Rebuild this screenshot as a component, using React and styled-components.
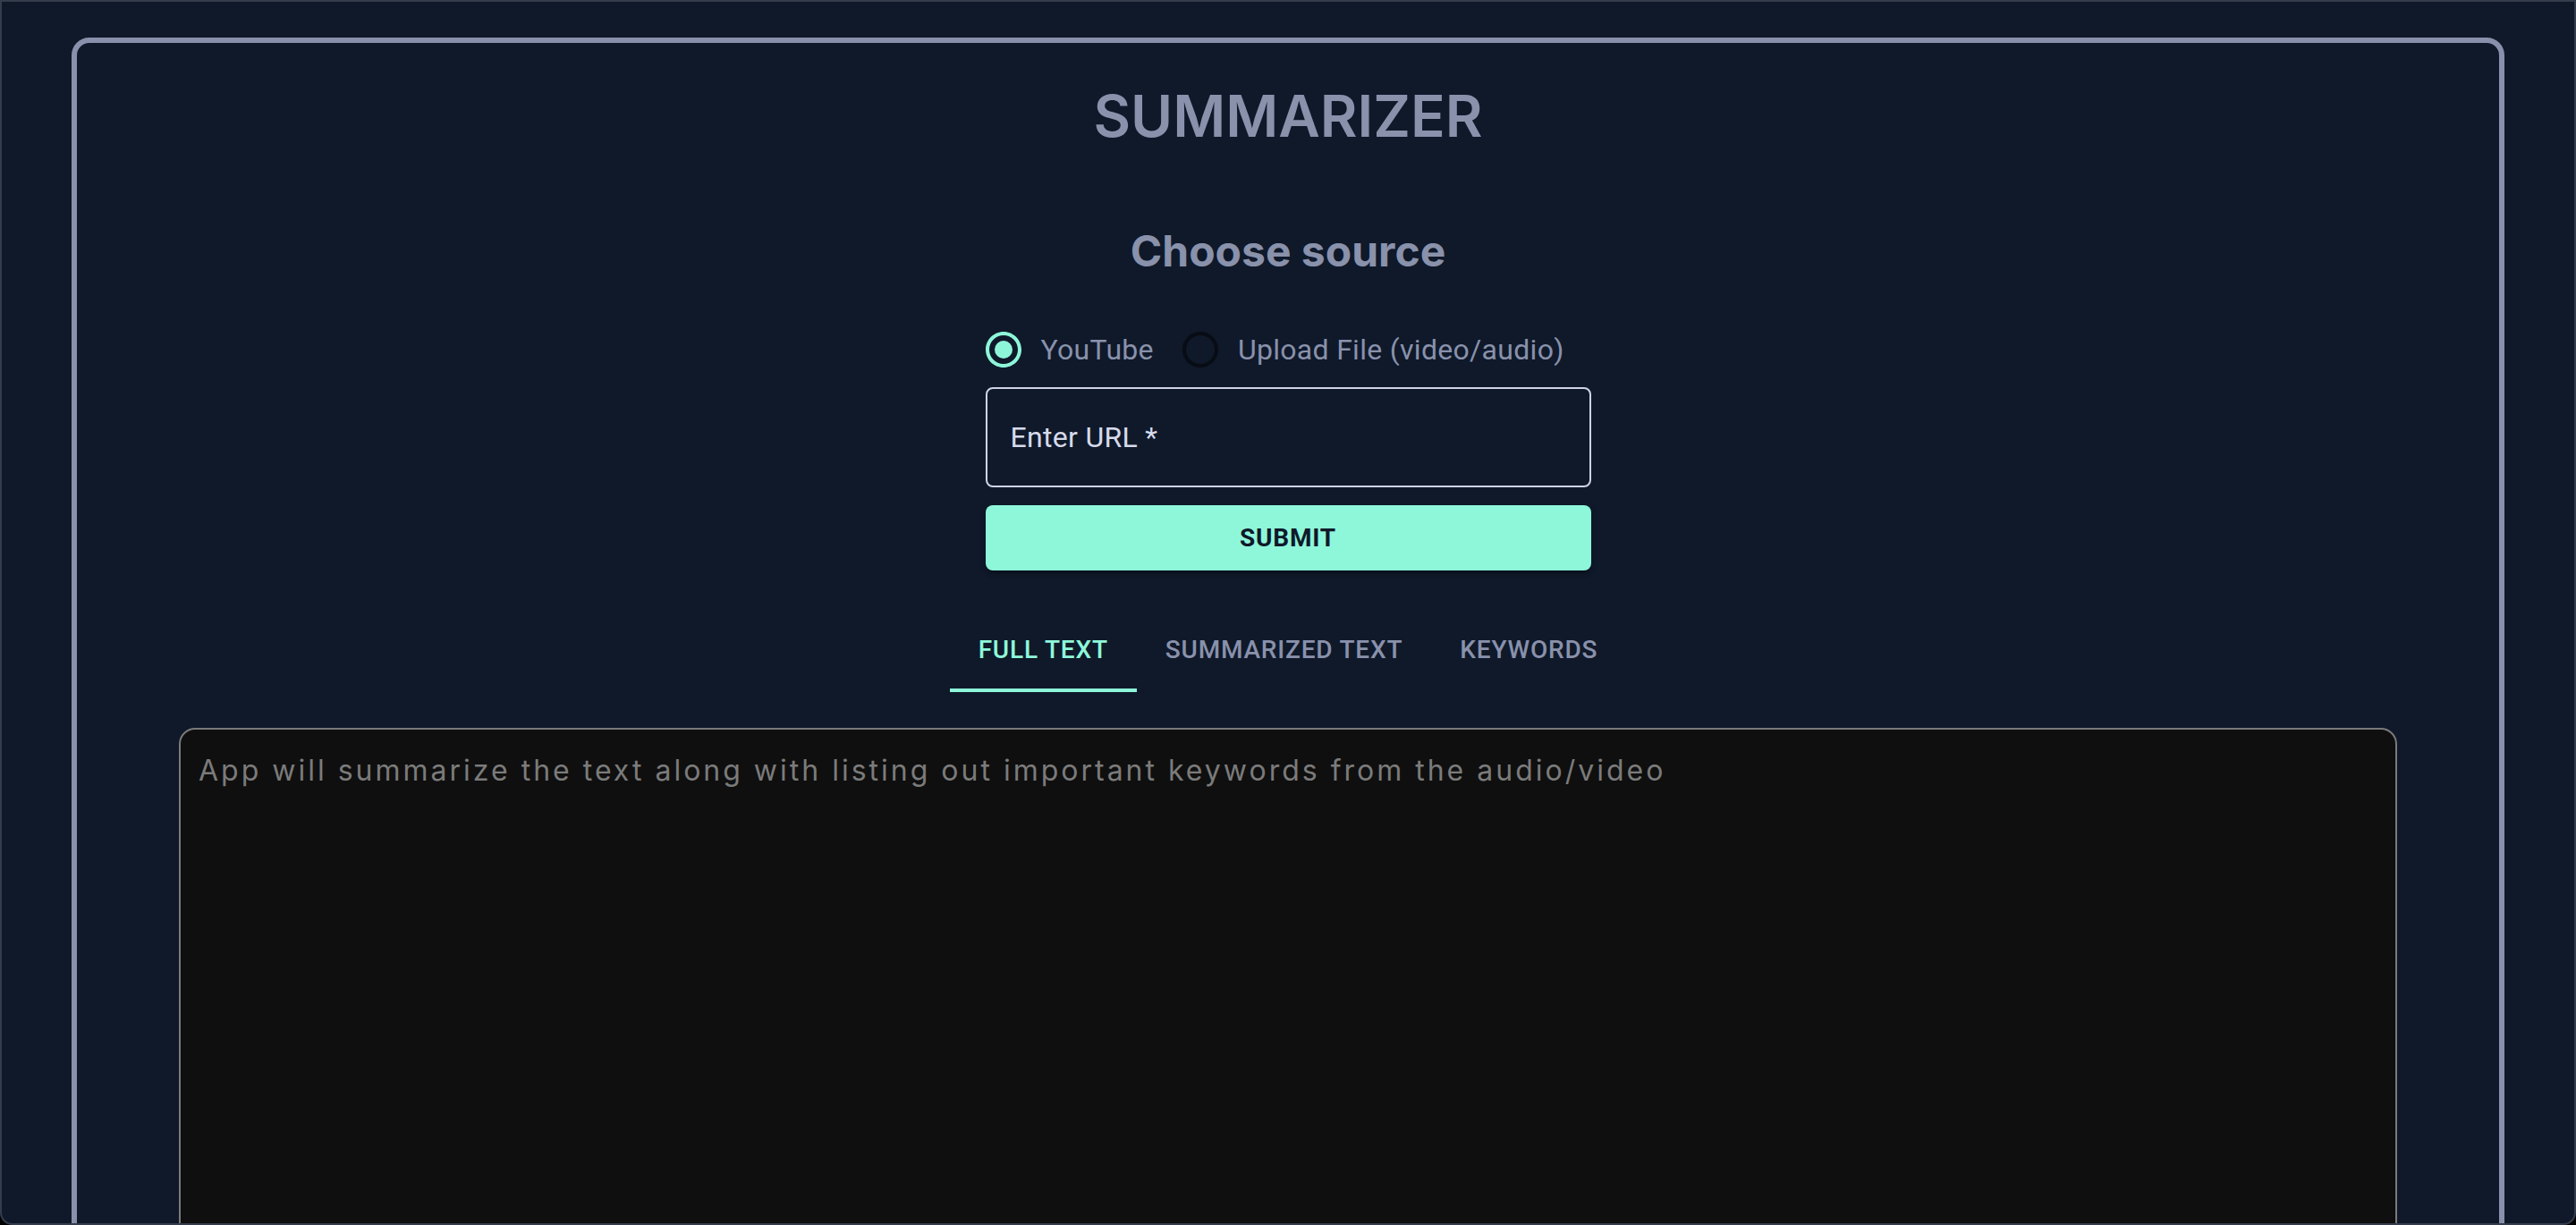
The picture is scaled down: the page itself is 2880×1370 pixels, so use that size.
import React, { useState } from "react";
import styled, { createGlobalStyle } from "styled-components";

const Global = createGlobalStyle`
  html, body { margin: 0; padding: 0; background: #000; }
  * { box-sizing: border-box; }
`;

const Frame = styled.div`
  height: 100vh;
  overflow: hidden;
  background: #0f192a;
  border: 2px solid #353c4b;
  border-radius: 0 0 14px 14px;
  padding: 40px 78px 0;
`;

const Card = styled.main`
  border: 6px solid #8890ab;
  border-radius: 20px;
  display: flex;
  flex-direction: column;
  align-items: center;
  padding-bottom: 60px;
`;

const Title = styled.h1`
  font-family: Inter, "Liberation Sans", sans-serif;
  font-size: 64px;
  font-weight: 600;
  color: #8991ab;
  margin: 0.67em 0;
  line-height: normal;
`;

const Subtitle = styled.h2`
  font-family: Inter, "Liberation Sans", sans-serif;
  font-size: 48px;
  font-weight: 700;
  color: #8991ab;
  margin: 0.83em 0;
  line-height: normal;
`;

const Form = styled.form`
  width: 677px;
  display: flex;
  flex-direction: column;
`;

const RadioGroup = styled.div`
  display: flex;
  flex-direction: row;
  flex-wrap: nowrap;
  white-space: nowrap;
`;

const RadioLabel = styled.label`
  display: inline-flex;
  align-items: center;
  flex-shrink: 0;
  margin-left: -22px;
  margin-right: 32px;
  cursor: pointer;
`;

const RadioButton = styled.span`
  display: inline-flex;
  padding: 18px;
  color: ${(p) => (p.$checked ? "#8df6d9" : "#080c14")};
`;

const RadioText = styled.span`
  font-family: Roboto, "Liberation Sans", sans-serif;
  font-size: 32px;
  line-height: 1.5;
  letter-spacing: 0.00938em;
  color: #8991ab;
`;

const Field = styled.div`
  height: 112px;
  border: 2px solid #cfd3e6;
  border-radius: 8px;
  display: flex;
  align-items: center;
  padding: 0 26px;
`;

const FieldLabel = styled.span`
  font-family: Roboto, "Liberation Sans", sans-serif;
  font-size: 32px;
  letter-spacing: 0.00938em;
  color: #d6daea;
`;

const Submit = styled.button`
  margin-top: 20px;
  height: 73px;
  border: none;
  border-radius: 8px;
  background: #8ef7da;
  color: #0f192a;
  font-family: Roboto, "Liberation Sans", sans-serif;
  font-weight: 700;
  font-size: 28px;
  letter-spacing: 0.02857em;
  text-transform: uppercase;
  box-shadow: 0 6px 2px -4px rgba(0, 0, 0, 0.2), 0 4px 4px 0 rgba(0, 0, 0, 0.14),
    0 2px 10px 0 rgba(0, 0, 0, 0.12);
  cursor: pointer;
`;

const Tabs = styled.div`
  margin-top: 40px;
  display: flex;
  justify-content: center;
`;

const Tab = styled.button`
  position: relative;
  min-width: 180px;
  min-height: 96px;
  padding: 24px 32px;
  border: none;
  background: transparent;
  font-family: Roboto, "Liberation Sans", sans-serif;
  font-weight: 500;
  font-size: 28px;
  line-height: 1.25;
  letter-spacing: 0.02857em;
  text-transform: uppercase;
  color: ${(p) => (p.$active ? "#8ef7da" : "#8991ab")};
  cursor: pointer;
  &::after {
    content: "";
    position: absolute;
    left: 0;
    right: 0;
    bottom: 0;
    height: 4px;
    background: ${(p) => (p.$active ? "#8ef7da" : "transparent")};
  }
`;

const Output = styled.textarea`
  margin-top: 40px;
  width: calc(100% - 228px);
  height: 760px;
  resize: none;
  background: #0f0f0f;
  border: 2px solid #7a7a7a;
  border-radius: 18px;
  padding: 26px 20px;
  font-family: Inter, "Liberation Sans", sans-serif;
  font-size: 32px;
  letter-spacing: 3px;
  color: #7b7b7b;
  outline: none;
  &::placeholder {
    color: #7b7b7b;
    opacity: 1;
  }
`;

const RadioIcon = ({ checked }) => (
  <svg width="48" height="48" viewBox="0 0 24 24" fill="currentColor">
    <path d="M12 2C6.48 2 2 6.48 2 12s4.48 10 10 10 10-4.48 10-10S17.52 2 12 2zm0 18c-4.42 0-8-3.58-8-8s3.58-8 8-8 8 3.58 8 8-3.58 8-8 8z" />
    {checked && <circle cx="12" cy="12" r="5" />}
  </svg>
);

export default function App() {
  const [source, setSource] = useState("youtube");
  const [tab, setTab] = useState(0);
  const sources = [
    { id: "youtube", label: "YouTube" },
    { id: "file", label: "Upload File (video/audio)" },
  ];
  const tabs = ["Full Text", "Summarized Text", "Keywords"];
  return (
    <>
      <Global />
      <Frame>
        <Card>
          <Title>SUMMARIZER</Title>
          <Subtitle>Choose source</Subtitle>
          <Form onSubmit={(e) => e.preventDefault()}>
            <RadioGroup>
              {sources.map((s) => (
                <RadioLabel key={s.id} onClick={() => setSource(s.id)}>
                  <RadioButton $checked={source === s.id}>
                    <RadioIcon checked={source === s.id} />
                  </RadioButton>
                  <RadioText>{s.label}</RadioText>
                </RadioLabel>
              ))}
            </RadioGroup>
            <Field>
              <FieldLabel>Enter URL *</FieldLabel>
            </Field>
            <Submit type="submit">Submit</Submit>
          </Form>
          <Tabs>
            {tabs.map((t, i) => (
              <Tab key={t} $active={tab === i} onClick={() => setTab(i)}>
                {t}
              </Tab>
            ))}
          </Tabs>
          <Output
            readOnly
            placeholder="App will summarize the text along with listing out important keywords from the audio/video"
          />
        </Card>
      </Frame>
    </>
  );
}
